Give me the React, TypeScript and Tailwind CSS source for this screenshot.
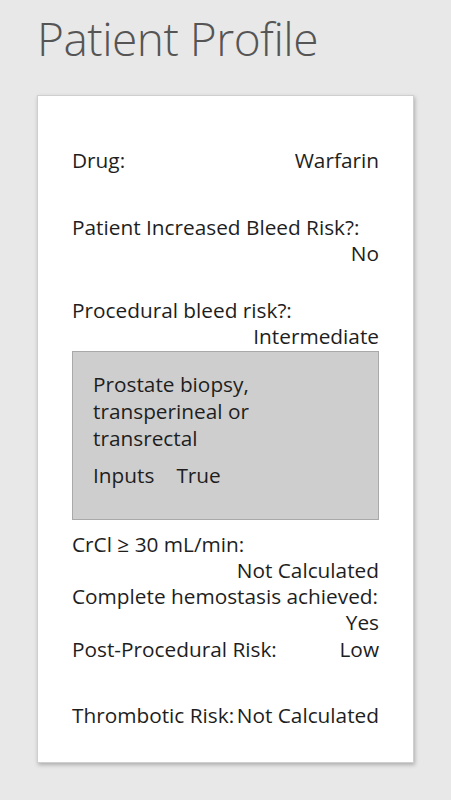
const rows1 = [
  { label: "Drug:", value: "Warfarin", cls: "" },
  { label: "Patient Increased Bleed Risk?:", value: "No", cls: "mt-[41px]" },
  { label: "Procedural bleed risk?:", value: "Intermediate", cls: "mt-[31px]" },
];

const rows2 = [
  { label: "CrCl ≥ 30 mL/min:", value: "Not Calculated", cls: "mt-[11px]" },
  { label: "Complete hemostasis achieved:", value: "Yes", cls: "" },
  { label: "Post-Procedural Risk:", value: "Low", cls: "mt-px" },
  { label: "Thrombotic Risk:", value: "Not Calculated", cls: "mt-[40px]" },
];

function Row({ label, value, cls }: { label: string; value: string; cls: string }) {
  return (
    <div className={`flex flex-wrap justify-between ${cls}`}>
      <span>{label}</span>
      <span className="ml-auto">{value}</span>
    </div>
  );
}

export default function App() {
  return (
    <main
      className="min-h-screen w-[451px] bg-[#e8e8e8] pt-[15px] pb-10"
      style={{ fontFamily: '"Open Sans", "Noto Sans", sans-serif' }}
    >
      <h1 className="ml-[37px] text-[46px] font-light leading-none tracking-[-0.5px] text-[#555]">
        Patient Profile
      </h1>

      <div className="mx-[37px] mt-[34px] w-[377px] border border-[#cfcfcf] bg-white pt-[51px] pb-[34px] pl-[34px] pr-[34px] text-[20.8px] font-medium leading-[26px] text-[#1e1e1e] shadow-[1px_2px_4px_rgba(0,0,0,0.25)]">
        {rows1.map((r) => (
          <Row key={r.label} {...r} />
        ))}

        <div className="mt-[2px] border border-[#a9a9a9] bg-[#cecece] pt-[19px] pb-[30px] pl-[20px] leading-[27px]">
          <p className="w-[200px]">Prostate biopsy, transperineal or transrectal</p>
          <div className="mt-[10px] flex gap-[22px]">
            <span>Inputs</span>
            <span>True</span>
          </div>
        </div>

        {rows2.map((r) => (
          <Row key={r.label} {...r} />
        ))}
      </div>
    </main>
  );
}
